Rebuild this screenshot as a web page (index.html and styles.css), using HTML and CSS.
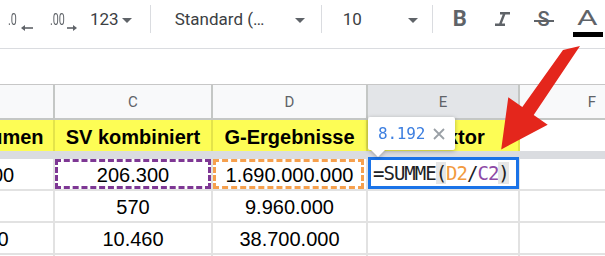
FILE: index.html
```html
<!DOCTYPE html>
<html>
<head>
<meta charset="utf-8">
<link rel="stylesheet" href="styles.css">
</head>
<body>
<div class="page">
  <div class="toolbar">
    <span class="tool dec less"><span class="dec-txt">.0</span><svg class="dec-arrow" width="12" height="6" viewBox="0 0 12 6"><path d="M3 3H12" stroke="#5f6368" stroke-width="1.6"/><path d="M0 3L4 0V6Z" fill="#5f6368"/></svg></span>
    <span class="tool dec more"><span class="dec-txt">.00</span><svg class="dec-arrow" width="10" height="6" viewBox="0 0 10 6"><path d="M0 3H7" stroke="#5f6368" stroke-width="1.6"/><path d="M10 3L6 0V6Z" fill="#5f6368"/></svg></span>
    <span class="tool numfmt">123</span><span class="caret"></span>
    <span class="sep sep-1"></span>
    <span class="tool fontname">Standard (…</span><span class="caret"></span>
    <span class="sep sep-2"></span>
    <span class="tool fontsize">10</span><span class="caret"></span>
    <span class="sep sep-3"></span>
    <span class="tool bold">B</span>
    <span class="tool italic"><svg width="17" height="14" viewBox="0 0 17 14"><path d="M6 1.2H16M1 12.8H11M10.5 1.2L6 12.8" stroke="#5f6368" stroke-width="2.4" fill="none"/></svg></span>
    <span class="tool strike">S</span>
    <span class="tool color"><span class="color-a">A</span></span>
  </div>

  <div class="sheet">
    <div class="grid">
      <div class="colhead">B</div>
      <div class="colhead">C</div>
      <div class="colhead">D</div>
      <div class="colhead selected">E</div>
      <div class="colhead">F</div>

      <div class="cell title">Suchvolumen</div>
      <div class="cell title">SV kombiniert</div>
      <div class="cell title">G-Ergebnisse</div>
      <div class="cell title">G-Faktor</div>
      <div class="cell blank-title"></div>

      <div class="freeze"></div>

      <div class="cell">830.000</div>
      <div class="cell ref ref-c">206.300</div>
      <div class="cell ref ref-d">1.690.000.000</div>
      <div class="cell edit">
        <div class="editor">
          <span class="f-txt">=SUMME</span><span class="paren">(</span><span class="f-d">D2</span><span class="f-txt">/</span><span class="f-c">C2</span><span class="paren">)</span>
          <div class="hint"><span class="hint-val">8.192</span><svg class="hint-x" width="12" height="12" viewBox="0 0 12 12"><path d="M1 1L11 11M11 1L1 11" stroke="#9aa0a6" stroke-width="1.8"/></svg></div>
        </div>
      </div>
      <div class="cell"></div>

      <div class="cell"></div>
      <div class="cell">570</div>
      <div class="cell">9.960.000</div>
      <div class="cell"></div>
      <div class="cell"></div>

      <div class="cell">12.100</div>
      <div class="cell">10.460</div>
      <div class="cell">38.700.000</div>
      <div class="cell"></div>
      <div class="cell"></div>

      <div class="cell"></div>
      <div class="cell"></div>
      <div class="cell"></div>
      <div class="cell"></div>
      <div class="cell"></div>
    </div>
  </div>

  <svg class="annotation" width="605" height="256" viewBox="0 0 605 256">
    <polygon points="563,50 580,46 533.7,115 547.7,124.7 501.2,149.5 508.3,97.3 522.3,107" fill="#e4261c"/>
  </svg>
</div>
</body>
</html>
```

FILE: styles.css
```css
* { box-sizing: border-box; }

body {
  margin: 0;
  background: #fff;
}

.page {
  position: relative;
  width: 605px;
  height: 256px;
  overflow: hidden;
  font-family: Roboto, "Liberation Sans", sans-serif;
}

/* ---------- toolbar ---------- */
.toolbar {
  display: flex;
  align-items: center;
  height: 49px;
  padding: 0 0 10px 8px;
  border-bottom: 1px solid #dadce0;
  color: #3c4043;
  font-size: 17px;
  line-height: 20px;
  white-space: nowrap;
}

.tool { display: inline-flex; align-items: center; }

.dec { color: #5f6368; }
.dec-txt {
  display: inline-block;
  transform: scaleX(0.63);
  transform-origin: left center;
}
.less .dec-txt { width: 9px; }
.more .dec-txt { width: 15px; }
.dec-arrow { margin-top: 18px; }
.less .dec-arrow { margin-left: 4px; }
.more { margin-left: 17px; }
.more .dec-arrow { margin-left: 2px; }

.numfmt { margin-left: 13px; }
.caret {
  width: 0;
  height: 0;
  border-left: 5px solid transparent;
  border-right: 5px solid transparent;
  border-top: 5px solid #5f6368;
  margin-left: 3px;
  margin-top: 2px;
}

.sep {
  width: 1px;
  height: 28px;
  background: #dadce0;
}
.sep-1 { margin-left: 18px; }
.sep-2 { margin-left: 16px; }
.sep-3 { margin-left: 14px; }

.fontname { margin-left: 24px; width: 117px; }
.fontsize { margin-left: 21px; width: 62px; }

.bold {
  margin-left: 20px;
  width: 15px;
  font-weight: 700;
  font-size: 22px;
  color: #5f6368;
}
.italic { margin-left: 26px; }
.strike {
  position: relative;
  margin-left: 23px;
  width: 20px;
  justify-content: center;
  font-size: 20px;
  font-weight: 500;
  color: #5f6368;
}
.strike::after {
  content: "";
  position: absolute;
  left: 0;
  right: 0;
  top: 11px;
  height: 2px;
  background: #5f6368;
}
.color {
  position: relative;
  margin-left: 19px;
  width: 30px;
  font-size: 21px;
  color: #5f6368;
}
.color-a {
  display: inline-block;
  margin-left: 4px;
  transform: translateY(-1px) scaleX(1.5);
  transform-origin: left center;
}
.color::after {
  content: "";
  position: absolute;
  left: 0;
  right: 0;
  top: 23px;
  height: 5px;
  background: #000;
}

/* ---------- sheet ---------- */
.sheet {
  margin-top: 35px;
  border-top: 1px solid #c7c7c7;
}

.grid {
  display: grid;
  grid-template-columns: 152px 158px 155px 152px 146px;
  grid-template-rows: 35px 31px 8px 32px 32px 32px 32px;
  margin-left: -97px;
  font-family: "Liberation Sans", Arial, sans-serif;
  font-size: 20px;
  color: #000;
}

.colhead {
  display: flex;
  align-items: center;
  justify-content: center;
  background: #f8f9fa;
  border-right: 2px solid #c4c7c5;
  border-bottom: 2px solid #c4c7c5;
  font-family: Roboto, "Liberation Sans", sans-serif;
  font-size: 15px;
  color: #5f6368;
}
.colhead.selected { background: #e3e5e8; }

.cell {
  display: flex;
  align-items: center;
  justify-content: center;
  padding-top: 3px;
  border-right: 2px solid #e2e2e2;
  border-bottom: 2px solid #e2e2e2;
  white-space: nowrap;
}

.title {
  background: #fdfd55;
  border-right-color: #e3e34a;
  border-bottom: none;
  font-weight: 700;
  padding-top: 4px;
}
.blank-title { border-bottom: none; }

.freeze {
  grid-column: 1 / -1;
  background: #dadce0;
}

.ref { position: relative; }
.ref::after {
  content: "";
  position: absolute;
  top: 0;
  bottom: 0;
  left: 0;
  border: 3px dashed;
}
.ref-c::after { right: 0; border-color: #7e3794; }
.ref-d::after { right: 2px; border-color: #f6a04d; }

.edit { position: relative; }
.editor {
  position: absolute;
  top: -2px;
  left: 0;
  right: -1px;
  bottom: 0;
  display: flex;
  align-items: center;
  padding-left: 2px;
  background: #fff;
  border: 3px solid #1a73e8;
  font-family: "DejaVu Sans Mono", "Liberation Mono", monospace;
  font-size: 19px;
  letter-spacing: -1px;
  color: #202124;
}
.paren { background: #e6e6e6; }
.f-d { color: #f29b3f; }
.f-c { color: #8e4aa6; }

.hint {
  position: absolute;
  left: -3px;
  bottom: calc(100% + 10px);
  width: 87px;
  height: 33px;
  display: flex;
  align-items: center;
  padding-left: 10px;
  background: #fff;
  border-radius: 2px;
  filter: drop-shadow(0 1px 2px rgba(0, 0, 0, 0.3));
}
.hint::after {
  content: "";
  position: absolute;
  left: 3px;
  top: 100%;
  border-left: 7px solid transparent;
  border-right: 7px solid transparent;
  border-top: 7px solid #fff;
}
.hint-val {
  font-size: 16px;
  letter-spacing: -0.2px;
  color: #3d7fe0;
}
.hint-x { margin-left: 8px; }

.annotation {
  position: absolute;
  top: 0;
  left: 0;
  pointer-events: none;
}
```
